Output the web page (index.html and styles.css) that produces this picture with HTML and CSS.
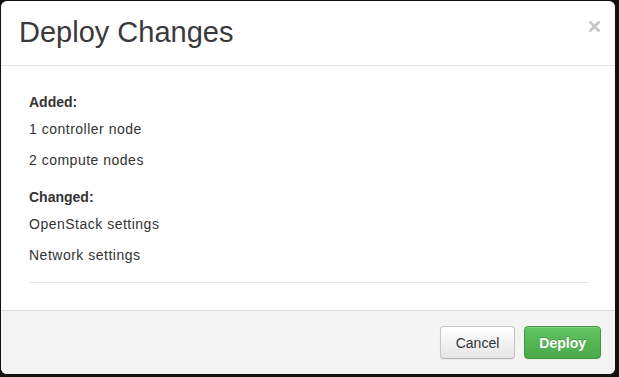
FILE: index.html
```html
<!DOCTYPE html>
<html lang="en">
<head>
    <meta charset="UTF-8">
    <meta name="viewport" content="width=device-width, initial-scale=1.0">
    <title>Deploy Changes</title>
    <link rel="stylesheet" href="styles.css">
</head>
<body>
    <div class="modal">
        <div class="modal-header">
            <h3 class="modal-title">Deploy Changes</h3>
            <button type="button" class="close" aria-label="Close">
                <svg width="11" height="11" viewBox="0 0 11 11">
                    <path d="M1.5 1.5 L9.5 9.5 M9.5 1.5 L1.5 9.5" stroke="#c9c9c9" stroke-width="3" stroke-linecap="square"/>
                </svg>
            </button>
        </div>
        <div class="modal-body">
            <div class="change-group">
                <div class="group-title">Added:</div>
                <div class="group-item">1 controller node</div>
                <div class="group-item">2 compute nodes</div>
            </div>
            <div class="change-group">
                <div class="group-title">Changed:</div>
                <div class="group-item">OpenStack settings</div>
                <div class="group-item">Network settings</div>
            </div>
            <hr class="divider">
        </div>
        <div class="modal-footer">
            <button type="button" class="btn btn-default">Cancel</button>
            <button type="button" class="btn btn-success">Deploy</button>
        </div>
    </div>
</body>
</html>
```

FILE: styles.css
```css
* {
    margin: 0;
    padding: 0;
    box-sizing: border-box;
    font-family: 'Liberation Sans', Arial, sans-serif;
}

body {
    background-color: #111;
    padding: 1px 0 0 1px;
    min-height: 100vh;
    overflow: hidden;
}

.modal {
    position: relative;
    width: 614px;
    height: 373px;
    background-color: #fff;
    border-radius: 6px;
    overflow: hidden;
    color: #333;
}

.modal-header {
    padding: 15px 18px 17px;
    border-bottom: 1px solid #e5e5e5;
}

.modal-title {
    font-size: 29px;
    font-weight: normal;
    line-height: 32px;
    color: #3a3a3a;
}

.close {
    position: absolute;
    top: 20px;
    right: 15px;
    width: 11px;
    height: 11px;
    border: none;
    background: none;
    cursor: pointer;
}

.close svg {
    display: block;
}

.modal-body {
    height: 244px;
    padding: 26px 26px 0 28px;
}

.change-group {
    margin-bottom: 17px;
}

.group-title {
    font-size: 14px;
    font-weight: bold;
    line-height: 20px;
    margin-bottom: 7px;
}

.group-item {
    font-size: 14px;
    letter-spacing: 0.5px;
    line-height: 20px;
    margin-bottom: 11px;
}

.divider {
    border: none;
    border-top: 1px solid #e8e8e8;
    margin-top: 16px;
}

.modal-footer {
    display: flex;
    justify-content: flex-end;
    gap: 9px;
    height: 64px;
    padding: 15px 14px;
    background-color: #f4f4f4;
    border-top: 1px solid #dcdcdc;
}

.btn {
    height: 33px;
    font-size: 14px;
    border-radius: 4px;
    cursor: pointer;
}

.btn-default {
    padding: 0 15px;
    color: #333;
    background-image: linear-gradient(to bottom, #ffffff, #e6e6e6);
    border: 1px solid #c6c6c6;
    border-bottom-color: #b3b3b3;
    box-shadow: inset 0 1px 0 rgba(255, 255, 255, 0.2), 0 1px 2px rgba(0, 0, 0, 0.05);
}

.btn-success {
    padding: 0 14px;
    color: #fff;
    font-weight: bold;
    background-image: linear-gradient(to bottom, #62c462, #4aa84a);
    border: 1px solid #3f9a3f;
    text-shadow: 0 -1px 0 rgba(0, 0, 0, 0.2);
    box-shadow: inset 0 1px 0 rgba(255, 255, 255, 0.2), 0 1px 2px rgba(0, 0, 0, 0.05);
}
```
